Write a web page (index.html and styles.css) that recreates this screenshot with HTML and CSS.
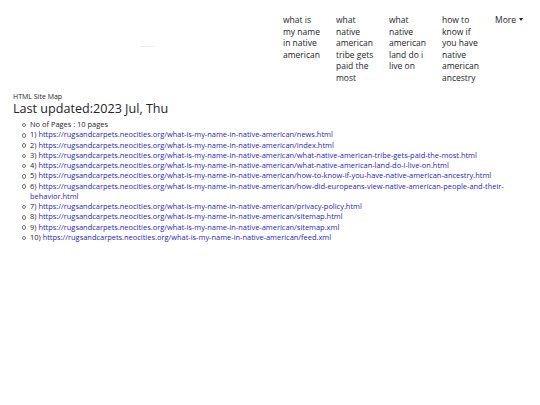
FILE: index.html
```html
<!DOCTYPE html>
<html>
<head>
<meta charset="utf-8">
<link rel="stylesheet" href="styles.css">
</head>
<body>
<header class="top">
  <div class="brand"><span class="brand-mark"></span></div>
  <nav class="nav">
    <a class="nav-item" href="#">what is my name in native american</a>
    <a class="nav-item" href="#">what native american tribe gets paid the most</a>
    <a class="nav-item" href="#">what native american land do i live on</a>
    <a class="nav-item" href="#">how to know if you have native american ancestry</a>
    <a class="nav-item more" href="#">More <span class="caret"></span></a>
  </nav>
</header>
<main class="content">
  <div class="label">HTML Site Map</div>
  <h1 class="title">Last updated:2023 Jul, Thu</h1>
  <ul class="pages">
    <li>No of Pages : 10 pages</li>
    <li>1) <a href="#">https://rugsandcarpets.neocities.org/what-is-my-name-in-native-american/news.html</a></li>
    <li>2) <a href="#">https://rugsandcarpets.neocities.org/what-is-my-name-in-native-american/index.html</a></li>
    <li>3) <a href="#">https://rugsandcarpets.neocities.org/what-is-my-name-in-native-american/what-native-american-tribe-gets-paid-the-most.html</a></li>
    <li>4) <a href="#">https://rugsandcarpets.neocities.org/what-is-my-name-in-native-american/what-native-american-land-do-i-live-on.html</a></li>
    <li>5) <a href="#">https://rugsandcarpets.neocities.org/what-is-my-name-in-native-american/how-to-know-if-you-have-native-american-ancestry.html</a></li>
    <li>6) <a href="#">https://rugsandcarpets.neocities.org/what-is-my-name-in-native-american/how-did-europeans-view-native-american-people-and-their-behavior.html</a></li>
    <li>7) <a href="#">https://rugsandcarpets.neocities.org/what-is-my-name-in-native-american/privacy-policy.html</a></li>
    <li>8) <a href="#">https://rugsandcarpets.neocities.org/what-is-my-name-in-native-american/sitemap.html</a></li>
    <li>9) <a href="#">https://rugsandcarpets.neocities.org/what-is-my-name-in-native-american/sitemap.xml</a></li>
    <li>10) <a href="#">https://rugsandcarpets.neocities.org/what-is-my-name-in-native-american/feed.xml</a></li>
  </ul>
</main>
</body>
</html>
```
FILE: styles.css
```css
html, body { margin: 0; padding: 0; background: #fff; }
body {
  font-family: "Open Sans", "Liberation Sans", sans-serif;
  color: #212529;
}
.top {
  display: flex;
  padding: 14px 0 0 0;
}
.brand { width: 283px; display: flex; justify-content: center; padding-top: 32px; }
.brand-mark { display: block; width: 14px; height: 1px; background: #ececec; margin-left: 10px; }
.nav {
  display: flex;
  flex: 1;
  align-items: flex-start;
}
.nav-item {
  width: 53px;
  padding-right: 11px;
  box-sizing: border-box;
  font-size: 8.5px;
  line-height: 11.5px;
  color: #212529;
  text-decoration: none;
}
.nav-item.more { width: auto; display: flex; align-items: center; gap: 3px; height: 11.5px; }
.caret {
  display: inline-block;
  width: 0; height: 0;
  border-left: 2.5px solid transparent;
  border-right: 2.5px solid transparent;
  border-top: 3px solid #212529;
}
.content { padding: 9px 13px 0 13px; }
.label { font-size: 7px; line-height: 10px; color: #212529; }
.title {
  margin: 0 0 4px 0;
  font-size: 12.6px;
  font-weight: 400;
  line-height: 13px;
}
.pages {
  margin: 0;
  padding: 0 0 0 17px;
  list-style: none;
  font-size: 7.45px;
  line-height: 10.25px;
}
.pages li { position: relative; }
.pages li::before {
  content: "";
  position: absolute;
  left: -8.5px;
  top: 3.8px;
  width: 2.6px;
  height: 2.6px;
  border: 0.7px solid #777;
  border-radius: 50%;
}
.pages a { color: #2323d4; text-decoration: none; }
```
